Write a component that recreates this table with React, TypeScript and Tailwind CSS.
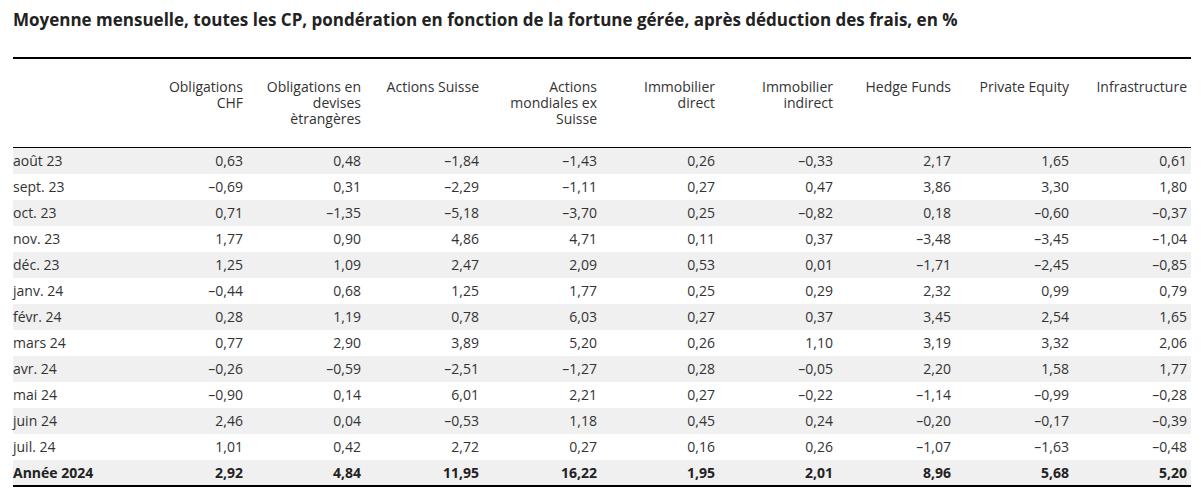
import React from 'react';

type Row = { label: string; values: string[]; total?: boolean };

const headers: React.ReactNode[] = [
  <>Obligations<br />CHF</>,
  <>Obligations en<br />devises<br />ètrangères</>,
  <>Actions Suisse</>,
  <>Actions<br />mondiales ex<br />Suisse</>,
  <>Immobilier<br />direct</>,
  <>Immobilier<br />indirect</>,
  <>Hedge Funds</>,
  <>Private Equity</>,
  <>Infrastructure</>,
];

const rows: Row[] = [
  { label: 'août 23', values: ['0,63', '0,48', '–1,84', '–1,43', '0,26', '–0,33', '2,17', '1,65', '0,61'] },
  { label: 'sept. 23', values: ['–0,69', '0,31', '–2,29', '–1,11', '0,27', '0,47', '3,86', '3,30', '1,80'] },
  { label: 'oct. 23', values: ['0,71', '–1,35', '–5,18', '–3,70', '0,25', '–0,82', '0,18', '–0,60', '–0,37'] },
  { label: 'nov. 23', values: ['1,77', '0,90', '4,86', '4,71', '0,11', '0,37', '–3,48', '–3,45', '–1,04'] },
  { label: 'déc. 23', values: ['1,25', '1,09', '2,47', '2,09', '0,53', '0,01', '–1,71', '–2,45', '–0,85'] },
  { label: 'janv. 24', values: ['–0,44', '0,68', '1,25', '1,77', '0,25', '0,29', '2,32', '0,99', '0,79'] },
  { label: 'févr. 24', values: ['0,28', '1,19', '0,78', '6,03', '0,27', '0,37', '3,45', '2,54', '1,65'] },
  { label: 'mars 24', values: ['0,77', '2,90', '3,89', '5,20', '0,26', '1,10', '3,19', '3,32', '2,06'] },
  { label: 'avr. 24', values: ['–0,26', '–0,59', '–2,51', '–1,27', '0,28', '–0,05', '2,20', '1,58', '1,77'] },
  { label: 'mai 24', values: ['–0,90', '0,14', '6,01', '2,21', '0,27', '–0,22', '–1,14', '–0,99', '–0,28'] },
  { label: 'juin 24', values: ['2,46', '0,04', '–0,53', '1,18', '0,45', '0,24', '–0,20', '–0,17', '–0,39'] },
  { label: 'juil. 24', values: ['1,01', '0,42', '2,72', '0,27', '0,16', '0,26', '–1,07', '–1,63', '–0,48'] },
  { label: 'Année 2024', values: ['2,92', '4,84', '11,95', '16,22', '1,95', '2,01', '8,96', '5,68', '5,20'], total: true },
];

export default function App() {
  return (
    <div className="bg-white text-[#333] pl-[13px] pt-[8px] pb-[14px] font-['Open_Sans',sans-serif]">
      <h1 className="text-[17px] leading-[24px] font-bold text-[#222]">
        Moyenne mensuelle, toutes les CP, pondération en fonction de la fortune gérée, après déduction des frais, en %
      </h1>

      <table className="mt-[25px] w-[1178px] table-fixed border-collapse border-t-2 border-b-2 border-black text-[14px]">
        <colgroup>
          <col className="w-[116px]" />
          {headers.map((_, i) => (
            <col key={i} className="w-[118px]" />
          ))}
        </colgroup>
        <thead>
          <tr className="border-b border-black">
            <th />
            {headers.map((h, i) => (
              <th key={i} className="pt-[20px] pb-[20px] pr-[4px] h-[88px] align-top text-right font-normal leading-[16px]">
                {h}
              </th>
            ))}
          </tr>
        </thead>
        <tbody>
          {rows.map((r, i) => (
            <tr key={r.label} className={i % 2 === 0 ? 'bg-[#f0f0f0]' : 'bg-white'}>
              <td className={`h-[26px] p-0 text-left whitespace-nowrap ${r.total ? 'font-bold text-[#222]' : ''}`}>{r.label}</td>
              {r.values.map((v, j) => (
                <td key={j} className={`h-[26px] p-0 pr-[4px] text-right ${r.total ? 'font-bold text-[#222]' : ''}`}>
                  {v}
                </td>
              ))}
            </tr>
          ))}
        </tbody>
      </table>
    </div>
  );
}
